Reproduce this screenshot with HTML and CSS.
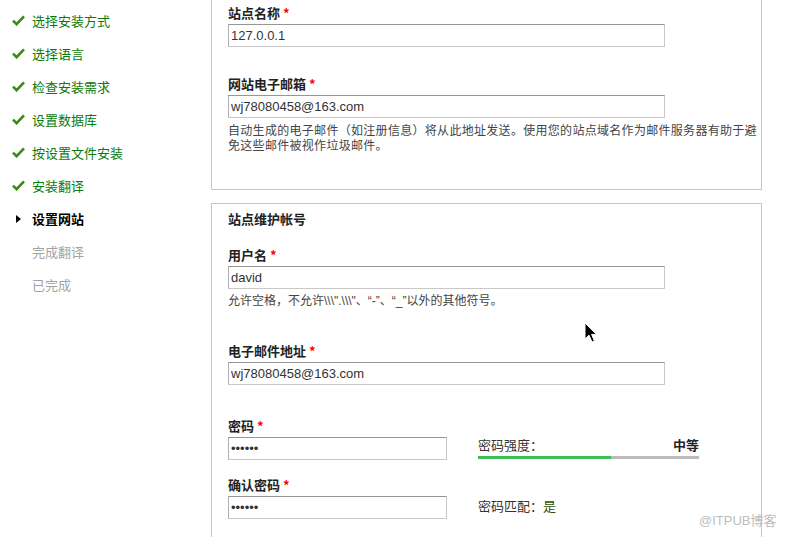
FILE: index.html
```html
<!DOCTYPE html>
<html lang="zh-CN">
<head>
<meta charset="utf-8">
<title>设置网站</title>
<link rel="stylesheet" href="styles.css">
</head>
<body>
<div class="page">
  <ol class="steps">
    <li class="step done"><span class="ico"><svg width="13" height="11" viewBox="0 0 13 11"><path d="M1 5.6 L4.6 9.2 L12 1.4" fill="none" stroke="#3b8a14" stroke-width="2.6"/></svg></span>选择安装方式</li>
    <li class="step done"><span class="ico"><svg width="13" height="11" viewBox="0 0 13 11"><path d="M1 5.6 L4.6 9.2 L12 1.4" fill="none" stroke="#3b8a14" stroke-width="2.6"/></svg></span>选择语言</li>
    <li class="step done"><span class="ico"><svg width="13" height="11" viewBox="0 0 13 11"><path d="M1 5.6 L4.6 9.2 L12 1.4" fill="none" stroke="#3b8a14" stroke-width="2.6"/></svg></span>检查安装需求</li>
    <li class="step done"><span class="ico"><svg width="13" height="11" viewBox="0 0 13 11"><path d="M1 5.6 L4.6 9.2 L12 1.4" fill="none" stroke="#3b8a14" stroke-width="2.6"/></svg></span>设置数据库</li>
    <li class="step done"><span class="ico"><svg width="13" height="11" viewBox="0 0 13 11"><path d="M1 5.6 L4.6 9.2 L12 1.4" fill="none" stroke="#3b8a14" stroke-width="2.6"/></svg></span>按设置文件安装</li>
    <li class="step done"><span class="ico"><svg width="13" height="11" viewBox="0 0 13 11"><path d="M1 5.6 L4.6 9.2 L12 1.4" fill="none" stroke="#3b8a14" stroke-width="2.6"/></svg></span>安装翻译</li>
    <li class="step active"><span class="ico"><span class="tri"></span></span>设置网站</li>
    <li class="step todo"><span class="ico"></span>完成翻译</li>
    <li class="step todo"><span class="ico"></span>已完成</li>
  </ol>

  <main class="main">
    <section class="box box-first">
      <div class="item">
        <div class="label">站点名称 <span class="req">*</span></div>
        <input class="field" type="text" value="127.0.0.1">
      </div>
      <div class="item item-gap28">
        <div class="label">网站电子邮箱 <span class="req">*</span></div>
        <input class="field" type="text" value="wj78080458@163.com">
        <div class="desc desc-wide">自动生成的电子邮件（如注册信息）将从此地址发送。使用您的站点域名作为邮件服务器有助于避免这些邮件被视作垃圾邮件。</div>
      </div>
    </section>

    <section class="box box-second">
      <div class="legend">站点维护帐号</div>
      <div class="item item-gap18">
        <div class="label">用户名 <span class="req">*</span></div>
        <input class="field" type="text" value="david">
        <div class="desc desc-one">允许空格，不允许\\\".\\\"、“-”、“_”以外的其他符号。</div>
      </div>
      <div class="item item-gap33">
        <div class="label">电子邮件地址 <span class="req">*</span></div>
        <input class="field" type="text" value="wj78080458@163.com">
      </div>
      <div class="row item-gap32">
        <div class="col">
          <div class="label">密码 <span class="req">*</span></div>
          <input class="field field-short" type="password" value="123456">
        </div>
        <div class="strength">
          <div class="strength-text"><span>密码强度：</span><b>中等</b></div>
          <div class="bar"><div class="bar-fill" style="width:60%"></div></div>
        </div>
      </div>
      <div class="row item-gap16">
        <div class="col">
          <div class="label">确认密码 <span class="req">*</span></div>
          <input class="field field-short" type="password" value="123456">
        </div>
        <div class="match">密码匹配：<span class="yes">是</span></div>
      </div>
    </section>
  </main>
</div>

<svg class="cursor" width="14" height="22" viewBox="0 0 14 22"><path d="M1 1 L1 17 L5 13.2 L8 20 L10.4 19 L7.6 12.4 L12.6 12.4 Z" fill="#000" stroke="#fff" stroke-width="1"/></svg>
<div class="watermark">@ITPUB博客</div>
</body>
</html>
```

FILE: styles.css
```css
html, body {
  margin: 0;
  padding: 0;
  overflow: hidden;
  background: #fff;
}
body {
  font-family: "Liberation Sans", "Noto Sans CJK SC", sans-serif;
  font-size: 13px;
  color: #222;
  height: 537px;
  position: relative;
}
.page {
  display: flex;
  align-items: flex-start;
}
.steps {
  list-style: none;
  margin: 0;
  padding: 4px 0 0 12px;
  width: 199px;
  flex: none;
}
.step {
  display: flex;
  align-items: center;
  height: 33px;
  line-height: 33px;
  font-family: "Noto Sans CJK SC", sans-serif;
  font-size: 13px;
}
.ico {
  width: 20px;
  flex: none;
  display: flex;
  align-items: center;
  height: 33px;
}
.ico svg {
  display: block;
  margin-top: -1px;
}
.done { color: #0a7a0a; }
.active { color: #000; font-weight: bold; }
.todo { color: #a3a3a3; }
.tri {
  display: block;
  width: 0;
  height: 0;
  margin-left: 4px;
  border-left: 5px solid #000;
  border-top: 4px solid transparent;
  border-bottom: 4px solid transparent;
}
.main {
  width: 551px;
  flex: none;
}
.box {
  border: 1px solid #c6c6c6;
  padding: 0 2px 0 16px;
}
.box-first {
  border-top: none;
  padding-top: 4px;
  padding-bottom: 37px;
}
.box-second {
  margin-top: 13px;
  padding-top: 6px;
  padding-bottom: 60px;
}
.legend, .label {
  font-family: "Noto Sans CJK SC", sans-serif;
  font-weight: bold;
  font-size: 13px;
  line-height: 18px;
  color: #222;
}
.req { color: #f00; }
.field {
  display: block;
  box-sizing: border-box;
  width: 437px;
  height: 23px;
  margin: 2px 0 0;
  padding: 0 2px;
  border: 1px solid #c8c8c8;
  border-top-color: #969696;
  border-left-color: #b0b0b0;
  border-radius: 0;
  font-family: "Liberation Sans", sans-serif;
  font-size: 13px;
  color: #333;
  background: #fff;
  outline: none;
}
.field-short { width: 219px; }
.desc {
  margin-top: 4px;
  font-family: "Noto Sans CJK SC", sans-serif;
  font-size: 12px;
  line-height: 15px;
  color: #444;
}
.desc-wide { letter-spacing: 0.3px; }
.desc-one {
  margin-top: 5px;
  font-family: "Liberation Sans", "Noto Sans CJK SC", sans-serif;
}
.item-gap28 { margin-top: 28px; }
.item-gap18 { margin-top: 18px; }
.item-gap33 { margin-top: 33px; }
.item-gap32 { margin-top: 32px; }
.item-gap16 { margin-top: 16px; }
.row {
  display: flex;
  align-items: flex-end;
}
.col { width: 219px; flex: none; }
.strength {
  margin-left: 31px;
  width: 221px;
  margin-bottom: 1px;
}
.strength-text {
  display: flex;
  justify-content: space-between;
  font-family: "Noto Sans CJK SC", sans-serif;
  font-size: 13px;
  line-height: 16px;
  color: #333;
}
.strength-text b { color: #222; }
.bar {
  margin-top: 3px;
  height: 3px;
  background: #bbb;
}
.bar-fill {
  height: 3px;
  background: #3cc056;
}
.match {
  margin-left: 31px;
  margin-bottom: 4px;
  font-family: "Noto Sans CJK SC", sans-serif;
  font-size: 13px;
  line-height: 18px;
  color: #333;
}
.yes { color: #2f4f00; }
.cursor {
  position: absolute;
  left: 584px;
  top: 322px;
}
.watermark {
  position: absolute;
  left: 699px;
  top: 512px;
  font-family: "Liberation Sans", "Noto Sans CJK SC", sans-serif;
  font-size: 13px;
  line-height: 18px;
  color: #bdbdbd;
}
```
